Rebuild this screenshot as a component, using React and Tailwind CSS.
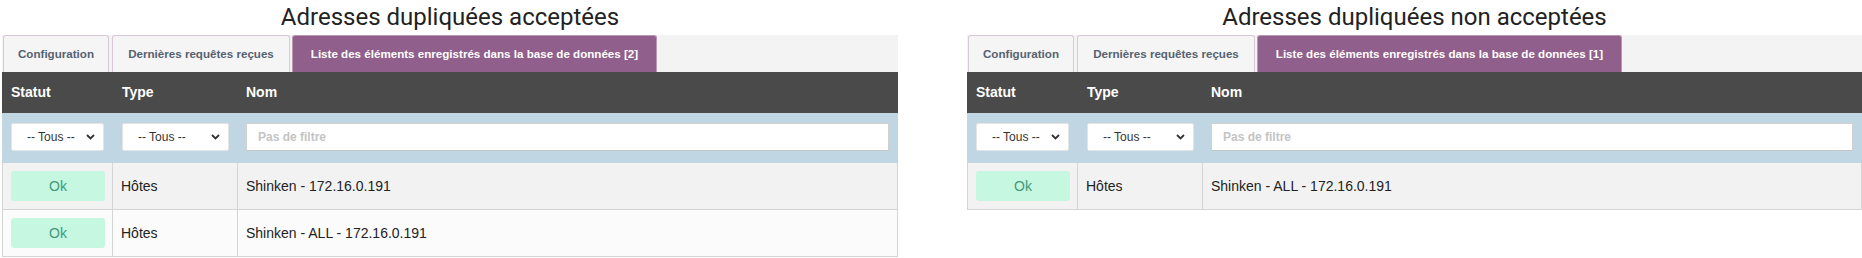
const PANELS = [
  {
    title: 'Adresses dupliquées acceptées',
    count: 2,
    width: 'w-[896px]',
    rows: ['Shinken - 172.16.0.191', 'Shinken - ALL - 172.16.0.191'],
  },
  {
    title: 'Adresses dupliquées non acceptées',
    count: 1,
    width: 'w-[895px]',
    rows: ['Shinken - ALL - 172.16.0.191'],
  },
]

function Chevron() {
  return (
    <svg width="9" height="6" viewBox="0 0 9 6" className="shrink-0">
      <polyline points="1,1 4.5,4.5 8,1" fill="none" stroke="#333" strokeWidth="1.8" />
    </svg>
  )
}

function FakeSelect({ w }) {
  return (
    <div className={`flex h-[28px] ${w} items-center justify-between rounded-[2px] border border-[#e4e4e4] bg-white pl-[15px] pr-[8px] text-[12px] text-[#333]`}>
      <span>-- Tous --</span>
      <Chevron />
    </div>
  )
}

function Panel({ p }) {
  return (
    <div className={`flex ${p.width} shrink-0 flex-col`}>
      <div className="flex h-[35px] items-start justify-center pt-[3px] font-['Roboto',sans-serif] text-[24px] leading-[28px] text-[#222]">
        {p.title}
      </div>

      {/* tabs */}
      <div className="flex h-[37px] items-end bg-[#f3f3f3] pl-px text-[11.6px] font-bold">
        <div className="flex h-full w-[106px] items-center justify-center rounded-t-[3px] border border-b-0 border-[#d9c9d6] bg-[#f5f5f5] text-[#556270]">
          Configuration
        </div>
        <div className="ml-[3px] flex h-full w-[178px] items-center justify-center rounded-t-[3px] border border-b-0 border-[#d9c9d6] bg-[#f5f5f5] text-[#556270]">
          Dernières requêtes reçues
        </div>
        <div className="ml-[2px] flex h-full w-[365px] items-center justify-center rounded-t-[3px] border border-b-0 border-[#b898b3] bg-[#915f8b] text-white">
          Liste des éléments enregistrés dans la base de données [{p.count}]
        </div>
      </div>

      {/* header */}
      <div className="grid h-[41px] grid-cols-[111px_125px_1fr] items-center bg-[#4a4a4a] text-[14px] font-bold text-white">
        <div className="pl-[9px]">Statut</div>
        <div className="pl-[9px]">Type</div>
        <div className="pl-[8px]">Nom</div>
      </div>

      {/* filters */}
      <div className="grid h-[50px] grid-cols-[111px_125px_1fr] items-center bg-[#c0d6e2] pb-[2px]">
        <div className="pl-[9px]"><FakeSelect w="w-[93px]" /></div>
        <div className="pl-[9px]"><FakeSelect w="w-[107px]" /></div>
        <div className="pl-[8px] pr-[9px]">
          <div className="flex h-[28px] items-center border border-[#d0d0d0] border-b-[#c4c4c4] bg-white pl-[11px] text-[12px] font-bold text-[#c4c4c4]">
            Pas de filtre
          </div>
        </div>
      </div>

      {/* rows */}
      <div className="border-x border-[#d4d4d4]">
        {p.rows.map((name, i) => (
          <div
            key={name}
            className={`grid h-[47px] grid-cols-[110px_125px_1fr] border-b border-[#d4d4d4] text-[14px] text-[#222] ${i % 2 === 0 ? 'bg-[#f2f2f2]' : 'bg-[#fbfbfb]'}`}
          >
            <div className="flex items-center border-r border-[#d4d4d4] pl-[8px]">
              <div className="flex h-[30px] w-[94px] items-center justify-center rounded-[3px] bg-[#c5f7e1] text-[#3f9a78]">Ok</div>
            </div>
            <div className="flex items-center border-r border-[#d4d4d4] pl-[8px]">Hôtes</div>
            <div className="flex items-center pl-[8px]">{name}</div>
          </div>
        ))}
      </div>
    </div>
  )
}

export default function App() {
  return (
    <div className="flex h-[258px] w-[1862px] gap-[69px] overflow-hidden bg-white pl-[2px] font-['Liberation_Sans',Arial,sans-serif]">
      {PANELS.map((p) => (
        <Panel key={p.title} p={p} />
      ))}
    </div>
  )
}
